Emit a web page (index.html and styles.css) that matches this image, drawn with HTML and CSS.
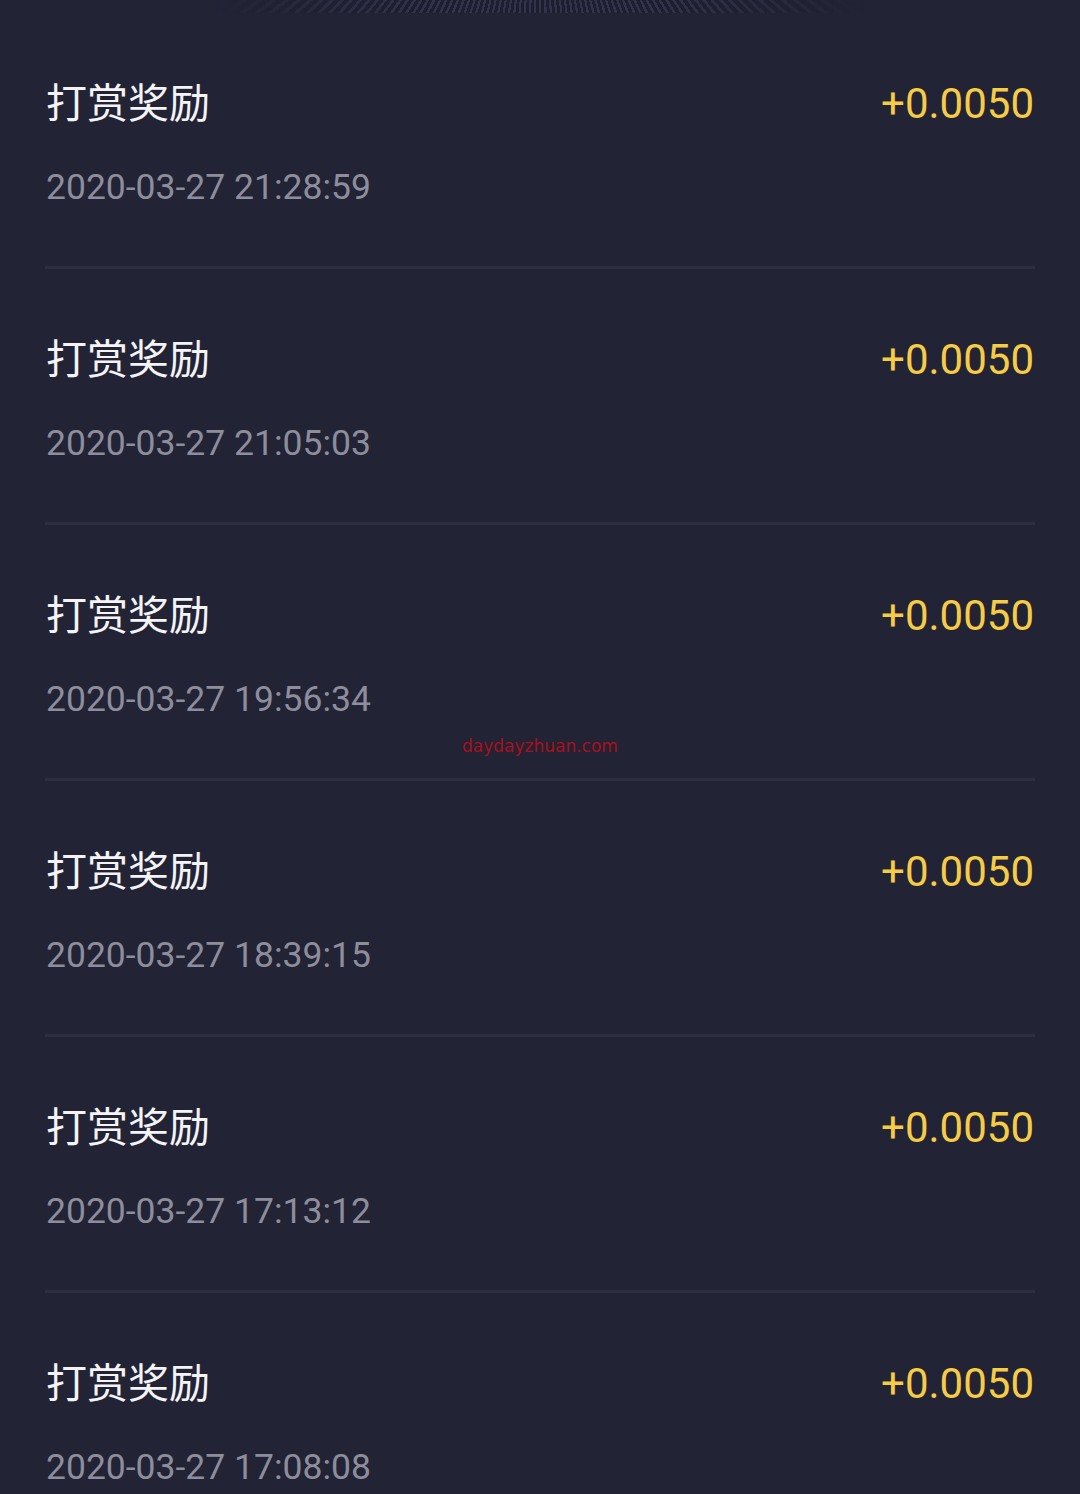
FILE: index.html
```html
<!DOCTYPE html>
<html lang="zh-CN">
<head>
  <meta charset="UTF-8">
  <meta name="viewport" content="width=device-width, initial-scale=1.0">
  <title>打赏奖励</title>
  <link rel="stylesheet" href="styles.css">
</head>
<body>
  <div class="top-band"></div>
  <main class="list">
    <div class="record">
      <div class="record-head">
        <span class="record-title">打赏奖励</span>
        <span class="record-amount">+0.0050</span>
      </div>
      <div class="record-time">2020-03-27 21:28:59</div>
    </div>
    <div class="record">
      <div class="record-head">
        <span class="record-title">打赏奖励</span>
        <span class="record-amount">+0.0050</span>
      </div>
      <div class="record-time">2020-03-27 21:05:03</div>
    </div>
    <div class="record">
      <div class="record-head">
        <span class="record-title">打赏奖励</span>
        <span class="record-amount">+0.0050</span>
      </div>
      <div class="record-time">2020-03-27 19:56:34</div>
      <span class="watermark">daydayzhuan.com</span>
    </div>
    <div class="record">
      <div class="record-head">
        <span class="record-title">打赏奖励</span>
        <span class="record-amount">+0.0050</span>
      </div>
      <div class="record-time">2020-03-27 18:39:15</div>
    </div>
    <div class="record">
      <div class="record-head">
        <span class="record-title">打赏奖励</span>
        <span class="record-amount">+0.0050</span>
      </div>
      <div class="record-time">2020-03-27 17:13:12</div>
    </div>
    <div class="record">
      <div class="record-head">
        <span class="record-title">打赏奖励</span>
        <span class="record-amount">+0.0050</span>
      </div>
      <div class="record-time">2020-03-27 17:08:08</div>
    </div>
  </main>
</body>
</html>
```

FILE: styles.css
```css
body {
  margin: 0;
  background: #222335;
  font-family: Roboto, "Noto Sans CJK SC", sans-serif;
  overflow: hidden;
}
.top-band {
  height: 13px;
  background:
    repeating-conic-gradient(from 90deg at 50% -200px, rgba(70, 72, 100, 0.5) 0deg 0.6deg, transparent 0.6deg 1.4deg),
    #1d1e30;
  -webkit-mask-image: linear-gradient(to right, transparent 20%, #000 40%, #000 60%, transparent 80%);
}
.list {
  display: flex;
  flex-direction: column;
}
.record {
  position: relative;
  margin: 0 45px;
  padding: 62px 1px 54px;
  border-bottom: 3px solid #2c2e42;
}
.record-head {
  display: flex;
  justify-content: space-between;
  align-items: center;
  height: 56px;
}
.record-title {
  margin-bottom: 6px;
  font-family: "Noto Sans CJK SC", sans-serif;
  font-size: 41px;
  color: #f4f4f6;
}
.record-amount {
  font-family: Roboto, sans-serif;
  font-size: 42px;
  color: #f6cb46;
}
.record-time {
  margin-top: 31px;
  height: 50px;
  line-height: 50px;
  font-size: 35.5px;
  color: #8d8d9b;
}
.watermark {
  position: absolute;
  left: 417px;
  top: 211px;
  font-family: "DejaVu Sans", sans-serif;
  font-size: 17px;
  color: #a8101a;
}
```
